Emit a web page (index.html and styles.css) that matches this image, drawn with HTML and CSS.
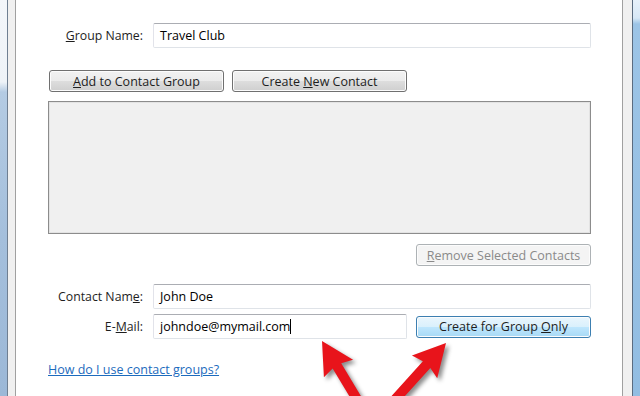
FILE: index.html
```html
<!DOCTYPE html>
<html>
<head>
    <title>Contact Group</title>
    <link rel="stylesheet" href="styles.css">
</head>
<body>
    <div class="window">
        <div class="frame frame-left"></div>
        <div class="edge edge-left"></div>

        <div class="content">
            <div class="field-row group-row">
                <label class="field-label"><u>G</u>roup Name:</label>
                <div class="textbox">Travel Club</div>
            </div>

            <div class="button-row">
                <button class="btn"><u>A</u>dd to Contact Group</button>
                <button class="btn">Create <u>N</u>ew Contact</button>
            </div>

            <div class="member-list"></div>

            <div class="remove-row">
                <button class="btn btn-disabled"><u>R</u>emove Selected Contacts</button>
            </div>

            <div class="field-row contact-row">
                <label class="field-label">Contact Nam<u>e</u>:</label>
                <div class="textbox">John Doe</div>
            </div>

            <div class="field-row mail-row">
                <label class="field-label">E-<u>M</u>ail:</label>
                <div class="textbox textbox-mail">johndoe@mymail.com<span class="caret"></span></div>
                <button class="btn btn-hot">Create for Group <u>O</u>nly</button>
            </div>

            <a class="help-link" href="#">How do I use contact groups?</a>
        </div>

        <div class="edge edge-right"></div>
        <div class="frame frame-right"></div>
    </div>

    <!-- red callout arrows drawn over the dialog -->
    <svg class="arrows" width="640" height="396" viewBox="0 0 640 396">
        <g transform="translate(322 341) rotate(-31)">
            <polygon points="0,0 -17,32 -5,29 -5,100 5,100 5,29 17,32" fill="#e8141b"/>
        </g>
        <g transform="translate(446 343) rotate(42)">
            <polygon points="0,0 -17,32 -5,29 -5,100 5,100 5,29 17,32" fill="#e8141b"/>
        </g>
    </svg>
</body>
</html>
```

FILE: styles.css
```css
body {
    margin: 0;
    padding: 0;
    width: 640px;
    height: 396px;
    overflow: hidden;
    background: #fff;
    font-family: 'Open Sans', 'Noto Sans', sans-serif;
    font-size: 12px;
    color: #1e1e1e;
    position: relative;
}

.window {
    display: flex;
    height: 396px;
}

.frame {
    width: 7px;
}

.frame-left {
    background: linear-gradient(to bottom, #f3f6fa 0, #eef3f8 82px, #b4cbe3 92px, #a4bfdc 60%, #9cb8d7 100%);
    border-right: 1px solid #6f7f92;
}

.frame-right {
    background: linear-gradient(to bottom, #e7f1fa 0, #d7e8f6 18px, #9cc4e6 24px, #92bde2 100%);
    border-left: 1px solid #5b6c80;
}

.edge {
    width: 7px;
    background: #f0f0f0;
}

.edge-left {
    width: 7px;
    border-right: 1px solid #a0a0a0;
}

.edge-right {
    width: 9px;
    border-left: 1px solid #a0a0a0;
}

.content {
    flex: 1;
    padding: 23px 31px 0 32px;
    display: flex;
    flex-direction: column;
}

.field-row {
    display: flex;
    align-items: center;
    height: 25px;
}

.field-label {
    width: 95px;
    padding-right: 10px;
    text-align: right;
    flex-shrink: 0;
    font-size: 12.3px;
}

.textbox {
    flex: 1;
    box-sizing: border-box;
    height: 25px;
    padding: 0 6px;
    line-height: 23px;
    border: 1px solid #dfe3e8;
    border-top-color: #abadb3;
    border-left-color: #e2e3ea;
    border-radius: 2px;
    font-size: 12.5px;
    color: #000;
    white-space: nowrap;
}

.caret {
    display: inline-block;
    width: 1px;
    height: 15px;
    background: #000;
    vertical-align: -3px;
}

.button-row {
    display: flex;
    gap: 8px;
    margin-top: 22px;
    padding-left: 1px;
}

.btn {
    width: 175px;
    height: 22px;
    padding: 0;
    font-family: 'Open Sans', 'Noto Sans', sans-serif;
    font-size: 12.5px;
    color: #1e1e1e;
    border: 1px solid #707070;
    border-radius: 3px;
    background: linear-gradient(to bottom, #f2f2f2 0%, #ebebeb 50%, #dddddd 51%, #cfcfcf 100%);
    box-shadow: inset 0 0 0 1px #fcfcfc;
}

.btn-disabled {
    color: #8a8a8a;
    border-color: #adb2b5;
    background: #f4f4f4;
}

.btn-hot {
    margin-left: 9px;
    border-color: #3c7fb1;
    background: linear-gradient(to bottom, #eaf6fd 0%, #d9f0fc 50%, #bee6fd 51%, #a7d9f5 100%);
}

.member-list {
    margin-top: 9px;
    height: 131px;
    background: #f0f0f0;
    border: 1px solid #8c8c8c;
    box-shadow: inset 0 0 0 1px #e3e3e3;
}

.remove-row {
    display: flex;
    justify-content: flex-end;
    margin-top: 10px;
}

.contact-row {
    margin-top: 18px;
}

.mail-row {
    margin-top: 5px;
}

.help-link {
    margin-top: 22px;
    color: #1c6bbd;
    font-size: 12.5px;
    align-self: flex-start;
}

.arrows {
    position: absolute;
    left: 0;
    top: 0;
    pointer-events: none;
    filter: drop-shadow(3px 3px 2px rgba(0, 0, 0, 0.45));
}
```
